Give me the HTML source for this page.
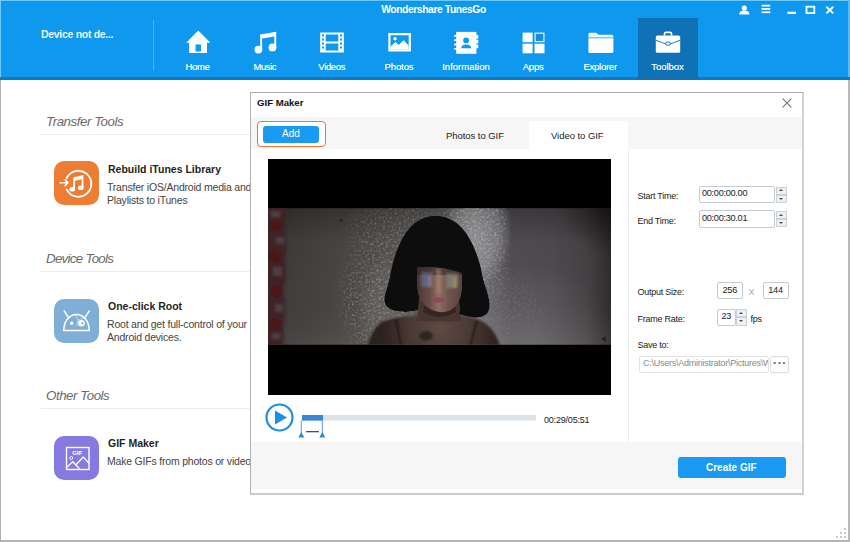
<!DOCTYPE html>
<html lang="en">
<head>
<meta charset="utf-8">
<title>Wondershare TunesGo</title>
<style>
*{box-sizing:border-box;margin:0;padding:0}
html,body{width:850px;height:542px;overflow:hidden;background:#fff}
body{position:relative;font-family:"Liberation Sans","DejaVu Sans",sans-serif;color:#222;font-size:10px}
.abs{position:absolute}
#win{position:absolute;left:0;top:0;width:850px;height:542px;background:#fff;overflow:hidden}
#winborder{position:absolute;left:0;top:80px;width:850px;height:462px;border-left:1px solid #b0b0b0;border-right:2px solid #b9b9b9;border-bottom:2px solid #b4b4b4;pointer-events:none;z-index:50}
/* header */
#hdr{position:absolute;left:0;top:0;width:850px;height:80px;background:#0f99ee}
#hdr .topline{position:absolute;left:0;top:0;width:850px;height:2px;background:linear-gradient(#6ccbfb 0,#6ccbfb 50%,#1690dc 50%,#1690dc 100%)}
#hdr .band{position:absolute;left:0;top:77px;width:850px;height:3px;background:#0e7ac4}
#hdr .divider{position:absolute;left:153px;top:20px;width:1px;height:51px;background:#4fb3f3}
#title{position:absolute;left:0;top:3px;width:867px;text-align:center;color:#fff;font-weight:bold;font-size:10.3px;line-height:13px;letter-spacing:-0.4px;white-space:nowrap}
#device{position:absolute;left:41px;top:28px;color:#e9f6ff;font-weight:bold;font-size:10.5px;line-height:13px;white-space:nowrap;letter-spacing:-0.3px}
.nav{position:absolute;top:18px;width:60px;height:62px;color:#fff;text-align:center}
.nav.sel{background:#0f71b6}
.nav svg{position:absolute;left:15px;top:10px;width:30px;height:28px}
.nav span{position:absolute;left:-10px;text-shadow:0 0 0.6px rgba(255,255,255,0.8);width:80px;top:43px;font-size:9.5px;line-height:12px;text-align:center;white-space:nowrap;color:#f2faff}
/* left panel */
.sect{position:absolute;left:46px;font-style:italic;color:#6a6a6a;font-size:13.3px;line-height:16px;white-space:nowrap;letter-spacing:-0.45px}
.rule{position:absolute;left:41px;width:300px;height:1px;background:#ededed}
.ico{position:absolute;left:54px;width:45px;height:44px}
.tname{position:absolute;left:108px;font-weight:bold;font-size:10.5px;line-height:13px;color:#1f1f1f;white-space:nowrap}
.tdesc{position:absolute;left:107px;font-size:10.5px;line-height:12.5px;color:#444;white-space:nowrap;letter-spacing:-0.2px}
/* dialog */
#dlg{position:absolute;left:250px;top:92px;width:554px;height:402.700px;background:#fff;border-top:1px solid #a3adb8;border-left:1px solid #adb3b9;border-right:2px solid #d2d2d2;border-bottom:2.200px solid #cbcbcb;overflow:hidden}
#dlg .dtitle{position:absolute;left:6px;top:2.5px;font-weight:bold;font-size:9.6px;line-height:13px;color:#111;white-space:nowrap}
#dlg .tabbar{position:absolute;left:0;top:23.500px;width:552px;height:32.500px;background:#f6f6f7}
#dlg .tabsel{position:absolute;left:278px;top:28px;width:99px;height:30px;background:#fff}
.tabtxt{position:absolute;top:36px;font-size:9.500px;letter-spacing:-0.050px;line-height:13px;color:#222;white-space:nowrap}
#dlg .foot{position:absolute;left:0;top:349px;width:552px;height:47.300px;background:#f6f6f7}
#dlg .vsep{position:absolute;left:377px;top:57px;width:1px;height:292px;background:#ececec}
.lbl{position:absolute;left:386.500px;font-size:9px;line-height:12px;color:#222;white-space:nowrap;letter-spacing:-0.250px}
.inp{position:absolute;height:17.600px;border:1px solid #c3cad2;border-radius:2px;background:#fff;font-size:9.200px;line-height:13px;color:#222;white-space:nowrap;overflow:hidden;letter-spacing:-0.300px}
.spin{position:absolute;width:10.500px;height:16px}
.spin i{position:absolute;left:0;width:10.500px;height:8px;border:1px solid #c9d0d8;background:#eef1f4;display:block}
.spin i:before{content:"";position:absolute;left:2.250px;top:2px;border:2px solid transparent}
.spin i.u{top:0}.spin i.u:before{border-bottom:2.200px solid #4a4a4a;top:-0.400px}
.spin i.d{top:8px}.spin i.d:before{border-top:2.200px solid #4a4a4a;top:2px}
.btn{position:absolute;background:#1a9af0;color:#fff;text-align:center;border-radius:3px;white-space:nowrap}
</style>
</head>
<body>
<div id="win">
  <!-- HEADER -->
  <div id="hdr">
    <div class="topline"></div>
    <div class="abs" style="left:0;top:0;width:1px;height:80px;background:#6ccbfb"></div>
    <div class="abs" style="left:848px;top:0;width:2px;height:80px;background:#5fb9f5"></div>
    <div class="band"></div>
    <div class="divider"></div>
    <div id="title">Wondershare TunesGo</div>
    <div id="device">Device not de...</div>

    <div class="nav" style="left:168px"><svg viewBox="0 0 30 28"><path d="M15.300 2.500 L27.400 14.800 H24 V25 H6.200 V14.800 H3.200 Z M12.500 16.600 V23.400 H18 V16.600 Z" fill="#fff" fill-rule="evenodd"/></svg><span style="left:-10.400px;letter-spacing:-0.300px">Home</span></div>
    <div class="nav" style="left:235px"><svg viewBox="0 0 30 28"><path d="M10.200 6.600 L26.200 3.800 V19.500 H24.300 V8.500 L12.100 10.600 V21.500 H10.200 Z" fill="#fff"/><circle cx="8.400" cy="21.600" r="3.900" fill="#fff"/><circle cx="22.500" cy="19.400" r="3.900" fill="#fff"/></svg><span style="left:-10.200px;letter-spacing:-0.450px">Music</span></div>
    <div class="nav" style="left:302px"><svg viewBox="0 0 30 28"><path d="M3.200 4.600 H26.800 V24.400 H3.200 Z M8.700 6.600 V13.600 H21.300 V6.600 Z M8.700 15.400 V22.400 H21.300 V15.400 Z M5 6.500 V8.500 H7 V6.500 Z M5 10.500 V12.500 H7 V10.500 Z M5 14.500 V16.500 H7 V14.500 Z M5 18.500 V20.500 H7 V18.500 Z M23 6.500 V8.500 H25 V6.500 Z M23 10.500 V12.500 H25 V10.500 Z M23 14.500 V16.500 H25 V14.500 Z M23 18.500 V20.500 H25 V18.500 Z" fill="#fff" fill-rule="evenodd"/></svg><span style="left:-10.300px;letter-spacing:-0.350px">Videos</span></div>
    <div class="nav" style="left:369px"><svg viewBox="0 0 30 28"><path d="M4.300 5 H26.900 V23.400 H4.300 Z M6.500 7.200 V21.200 H24.700 V7.200 Z" fill="#fff" fill-rule="evenodd"/><path d="M6.500 21.200 V18.500 L11.500 14 L14.800 17 L19.500 12.300 L24.700 17.500 V21.200 Z" fill="#fff"/><circle cx="11" cy="10.800" r="1.700" fill="#fff"/></svg><span style="left:-10px;letter-spacing:-0.100px">Photos</span></div>
    <div class="nav" style="left:437px"><svg viewBox="0 0 30 28"><path d="M4.200 3.900 H24.400 V25.800 H4.200 Z" fill="#fff"/><circle cx="14.100" cy="12.400" r="2.900" fill="#0f99ee"/><path d="M9.200 20.200 Q9.200 16.400 14.100 16.400 Q19.200 16.400 19.200 20.200 Z" fill="#0f99ee"/><g fill="#fff"><rect x="2" y="7" width="4" height="1.800" rx="0.900"/><rect x="2" y="11.300" width="4" height="1.800" rx="0.900"/><rect x="2" y="15.600" width="4" height="1.800" rx="0.900"/><rect x="2" y="19.900" width="4" height="1.800" rx="0.900"/></g><g fill="#fff"><rect x="24" y="7" width="2.300" height="3.600"/><rect x="24" y="11.800" width="2.300" height="3.600"/><rect x="24" y="16.600" width="2.300" height="3.600"/></g></svg><span style="left:-11px">Information</span></div>
    <div class="nav" style="left:504px"><svg viewBox="0 0 30 28"><rect x="3.600" y="4.600" width="10" height="9.600" fill="#fff"/><rect x="16.100" y="5.200" width="8.800" height="8.400" fill="#1a8be0" stroke="#fff" stroke-width="1.200" stroke-opacity="0.9"/><rect x="3.600" y="15.700" width="10" height="9.600" fill="#fff"/><rect x="15.500" y="15.700" width="10" height="9.600" fill="#fff"/></svg><span style="left:-10.900px;letter-spacing:-0.200px">Apps</span></div>
    <div class="nav" style="left:571px"><svg viewBox="0 0 30 28"><path d="M2.400 6.500 Q2.400 4.800 4 4.800 H10.500 L12.500 6.800 H25.800 Q27.400 6.800 27.400 8.400 V9.600 H2.400 Z" fill="#fff" opacity="0.93"/><path d="M2.400 10.300 H27.400 V23.400 Q27.400 25 25.800 25 H4 Q2.400 25 2.400 23.400 Z" fill="#fff"/></svg><span style="left:-10.900px;letter-spacing:-0.250px">Explorer</span></div>
    <div class="nav sel" style="left:638px"><svg viewBox="0 0 30 28"><path d="M11.500 7.600 V5.800 Q11.500 4.400 13 4.400 H17 Q18.500 4.400 18.500 5.800 V7.600" fill="none" stroke="#fff" stroke-width="1.700"/><path d="M2.800 9 Q2.800 7.400 4.400 7.400 H25.600 Q27.200 7.400 27.200 9 V23.200 Q27.200 24.800 25.600 24.800 H4.400 Q2.800 24.800 2.800 23.200 Z" fill="#fff"/><path d="M2.800 12.200 L13 16 M17 16 L27.200 12.200" stroke="#0f71b6" stroke-width="0.900" fill="none"/><rect x="12.700" y="14" width="4.600" height="3.200" rx="1.200" fill="#fff" stroke="#0f71b6" stroke-width="0.900"/></svg><span style="left:-10.500px">Toolbox</span></div>

    <!-- window controls -->
    <svg class="abs" style="left:735px;top:2px;width:100px;height:16px" viewBox="0 0 100 16">
      <g fill="#fff">
        <circle cx="9.300" cy="6" r="2.600"/><path d="M4.200 12.600 Q4.200 8.400 9.300 8.400 Q14.400 8.400 14.400 12.600 Z"/>
        <rect x="26.600" y="2.800" width="8.700" height="1.700"/><rect x="26.600" y="6.100" width="8.700" height="1.700"/><rect x="26.600" y="9.400" width="8.700" height="1.700"/>
        <rect x="52.400" y="9.700" width="8.600" height="2.300"/>
      </g>
      <rect x="71.500" y="4.700" width="7.800" height="6.400" fill="none" stroke="#fff" stroke-width="1.800"/>
      <path d="M91.300 4.800 L98.300 11.400 M98.300 4.800 L91.300 11.400" stroke="#fff" stroke-width="1.900" fill="none"/>
    </svg>
  </div>

  <!-- LEFT TOOLS -->
  <div class="sect" style="top:114px">Transfer Tools</div>
  <div class="rule" style="top:134px"></div>
  <svg class="ico" style="top:161px" viewBox="0 0 45 44"><rect width="45" height="44" rx="10" fill="#ee7d34"/><path d="M12.600 17.200 A13 13 0 1 1 12.600 28.400" fill="none" stroke="#fff" stroke-width="1.800" stroke-linecap="round"/><path d="M6 21.800 H13.500 M11 18.800 L14 21.800 L11 24.800" fill="none" stroke="#fff" stroke-width="1.500" stroke-linecap="round" stroke-linejoin="round"/><path d="M19.200 16.400 L29.400 14 V26.400 H27.700 V18.200 L20.900 19.800 V28 H19.200 Z" fill="#fff"/><ellipse cx="18.200" cy="28.300" rx="2.800" ry="2.300" fill="#fff"/><ellipse cx="26.800" cy="26.800" rx="2.800" ry="2.300" fill="#fff"/></svg>
  <div class="tname" style="top:163px">Rebuild iTunes Library</div>
  <div class="tdesc" style="top:181px">Transfer iOS/Android media and<br>Playlists to iTunes</div>

  <div class="sect" style="top:251px;letter-spacing:-0.7px">Device Tools</div>
  <div class="rule" style="top:271px"></div>
  <svg class="ico" style="top:299px" viewBox="0 0 45 44"><rect width="45" height="44" rx="10" fill="#7fafd7"/><path d="M9.800 31.400 H35.200 A12.700 16 0 0 0 9.800 31.400 Z" fill="none" stroke="#fff" stroke-width="1.500" stroke-linejoin="round"/><path d="M10.300 12 L14.200 18.200 M35.200 12 L31.200 18.200" stroke="#fff" stroke-width="1.500" stroke-linecap="round" fill="none"/><circle cx="17.700" cy="24.200" r="1.700" fill="#fff"/><circle cx="27.400" cy="24.200" r="3.300" fill="#fff"/><circle cx="28.400" cy="24.200" r="1.100" fill="#7fafd7"/><path d="M21.500 16 L24 21 L22.500 27 M24 21 L30 19" stroke="#fff" stroke-width="0.600" fill="none" opacity="0.8"/></svg>
  <div class="tname" style="top:300px">One-click Root</div>
  <div class="tdesc" style="top:318px">Root and get full-control of your<br>Android devices.</div>

  <div class="sect" style="top:388px">Other Tools</div>
  <div class="rule" style="top:408px"></div>
  <svg class="ico" style="top:436px" viewBox="0 0 45 44"><rect width="45" height="44" rx="10" fill="#8679e0"/><rect x="12.500" y="11.500" width="22.500" height="22" fill="none" stroke="#fff" stroke-width="1.400"/><text x="23.300" y="18.500" font-family="Liberation Sans, sans-serif" font-weight="bold" font-size="6.200" fill="#fff" text-anchor="middle">GIF</text><circle cx="17.200" cy="22" r="1.500" fill="none" stroke="#fff" stroke-width="0.900"/><path d="M12.800 31.300 L18.700 25.700 L25.500 32.700 M22 28.800 L29.200 21 L35 27.300" fill="none" stroke="#fff" stroke-width="1.300" stroke-linejoin="round"/></svg>
  <div class="tname" style="top:437px">GIF Maker</div>
  <div class="tdesc" style="top:455px">Make GIFs from photos or videos</div>

  <!-- DIALOG -->
  <div id="dlg">
    <div class="dtitle">GIF Maker</div>
    <svg class="abs" style="left:529.300px;top:2.500px;width:14px;height:14px" viewBox="0 0 14 14"><path d="M2.700 2.700 L11.300 11.300 M11.300 2.700 L2.700 11.300" stroke="#707070" stroke-width="1.100" fill="none"/></svg>
    <div class="tabbar"></div>
    <div class="tabsel"></div>
    <div class="abs" style="left:6.300px;top:28.200px;width:68.500px;height:26.200px;border:1.500px solid #e8743a;border-radius:4px;background:#fff"></div>
    <div class="btn" style="left:12px;top:33px;width:56px;height:16.500px;font-size:10px;line-height:15.500px">Add</div>
    <div class="tabtxt" style="left:195px">Photos to GIF</div>
    <div class="tabtxt" style="left:300px">Video to GIF</div>

    <!-- video -->
    <svg class="abs" id="video" style="left:17.300px;top:65.700px;width:343px;height:236px" viewBox="0 0 343 236" preserveAspectRatio="none">
      <defs>
        <linearGradient id="wall" gradientUnits="userSpaceOnUse" x1="0" y1="0" x2="343" y2="0">
          <stop offset="0" stop-color="#322e2e"/>
          <stop offset="0.06" stop-color="#413d3c"/>
          <stop offset="0.13" stop-color="#45413f"/>
          <stop offset="0.28" stop-color="#4e4a47"/>
          <stop offset="0.38" stop-color="#575351"/>
          <stop offset="0.5" stop-color="#605e5e"/>
          <stop offset="0.6" stop-color="#737175"/>
          <stop offset="0.66" stop-color="#605e63"/>
          <stop offset="0.71" stop-color="#524f53"/>
          <stop offset="0.83" stop-color="#4f4b4f"/>
          <stop offset="0.93" stop-color="#454144"/>
          <stop offset="1" stop-color="#302c2e"/>
        </linearGradient>
        <linearGradient id="vshade" x1="0" y1="0" x2="0" y2="1">
          <stop offset="0" stop-color="#000" stop-opacity="0.28"/>
          <stop offset="0.25" stop-color="#000" stop-opacity="0.04"/>
          <stop offset="0.6" stop-color="#000" stop-opacity="0"/>
          <stop offset="1" stop-color="#fff" stop-opacity="0.05"/>
        </linearGradient>
        <radialGradient id="glowR" gradientUnits="userSpaceOnUse" cx="262" cy="190" r="85">
          <stop offset="0" stop-color="#fff" stop-opacity="0.13"/>
          <stop offset="1" stop-color="#fff" stop-opacity="0"/>
        </radialGradient>
        <radialGradient id="vigTR" gradientUnits="userSpaceOnUse" cx="348" cy="40" r="58">
          <stop offset="0" stop-color="#000" stop-opacity="0.55"/>
          <stop offset="1" stop-color="#000" stop-opacity="0"/>
        </radialGradient>
        <radialGradient id="gm" cx="0.5" cy="0.5" r="0.5">
          <stop offset="0" stop-color="#fff" stop-opacity="1"/>
          <stop offset="0.6" stop-color="#fff" stop-opacity="0.75"/>
          <stop offset="1" stop-color="#fff" stop-opacity="0"/>
        </radialGradient>
        <radialGradient id="skin" gradientUnits="userSpaceOnUse" cx="172" cy="170" r="60">
          <stop offset="0" stop-color="#5e4a44"/>
          <stop offset="0.5" stop-color="#4a3934"/>
          <stop offset="1" stop-color="#2c201e"/>
        </radialGradient>
        <linearGradient id="face" gradientUnits="userSpaceOnUse" x1="149" y1="0" x2="194" y2="0">
          <stop offset="0" stop-color="#4a3636"/>
          <stop offset="0.3" stop-color="#6d4f4c"/>
          <stop offset="0.48" stop-color="#8e6f60"/>
          <stop offset="0.7" stop-color="#705350"/>
          <stop offset="1" stop-color="#5a4344"/>
        </linearGradient>
        <filter id="soft" x="-10%" y="-10%" width="120%" height="120%"><feGaussianBlur stdDeviation="1.2"/></filter>
        <filter id="soft3" x="-30%" y="-10%" width="160%" height="120%"><feGaussianBlur stdDeviation="1.8"/></filter>
        <filter id="soft2" x="-10%" y="-10%" width="120%" height="120%"><feGaussianBlur stdDeviation="0.6"/></filter>
        <filter id="grain" x="0" y="0" width="100%" height="100%">
          <feTurbulence type="fractalNoise" baseFrequency="0.45" numOctaves="2" seed="11" result="n"/>
          <feColorMatrix in="n" type="matrix" values="0 0 0 0 0.64  0 0 0 0 0.63  0 0 0 0 0.65  2.2 0 0 0 -1.0"/>
        </filter>
        <mask id="gmask" maskUnits="userSpaceOnUse" x="0" y="0" width="343" height="236">
          <ellipse cx="214" cy="88" rx="30" ry="68" fill="url(#gm)"/>
          <ellipse cx="205" cy="62" rx="40" ry="30" fill="url(#gm)"/>
          <ellipse cx="112" cy="140" rx="48" ry="75" fill="url(#gm)" opacity="0.85"/>
          <ellipse cx="130" cy="70" rx="60" ry="34" fill="url(#gm)" opacity="0.6"/>
          <ellipse cx="240" cy="150" rx="45" ry="45" fill="url(#gm)" opacity="0.3"/>
        </mask>
        <clipPath id="pic"><rect x="0" y="49.200" width="343" height="136.600"/></clipPath>
      </defs>
      <rect x="0" y="0" width="343" height="236" fill="#000"/>
      <g clip-path="url(#pic)">
        <rect x="0" y="49" width="343" height="137" fill="url(#wall)"/>
        <rect x="0" y="49" width="343" height="137" fill="url(#vshade)"/>
        <rect x="0" y="49" width="343" height="137" fill="url(#glowR)"/>
        <rect x="0" y="49" width="343" height="137" fill="url(#vigTR)"/>
        <ellipse cx="210" cy="72" rx="34" ry="58" fill="url(#gm)" opacity="0.24"/>
        <ellipse cx="118" cy="150" rx="30" ry="55" fill="url(#gm)" opacity="0.08"/>
        <g mask="url(#gmask)"><rect x="50" y="49" width="250" height="137" filter="url(#grain)" opacity="0.6"/></g>
        <!-- brick edge -->
        <g filter="url(#soft3)">
          <path d="M-2 47 H17 Q20 60 16 72 Q21 86 17 100 Q20 116 15 130 Q19 150 15 168 Q17 178 14 188 H-2 Z" fill="#3d2326"/>
          <path d="M3 62 q5 -4 9 1 q3 6 -2 9 q-6 2 -8 -3 Z M2 92 q6 -3 10 2 q2 8 -4 10 q-7 0 -7 -6 Z M4 128 q5 -5 9 0 q3 7 -3 12 q-7 -1 -7 -6 Z M3 160 q6 -3 9 3 q0 8 -5 9 q-6 -2 -5 -7 Z" fill="#4d1218" opacity="0.9"/>
          <path d="M3 52 h9 v6 h-9 Z M8 78 h8 v7 h-8 Z M5 108 h9 v9 h-9 Z M7 145 h8 v8 h-8 Z M4 174 h8 v6 h-8 Z" fill="#5e5553" opacity="0.55"/>
        </g>
        <circle cx="73" cy="61.500" r="1.200" fill="#1e1c1c"/>
        <path d="M333 180 l5 -3 v6 Z" fill="#242223"/>
        <!-- shoulders / body -->
        <g filter="url(#soft)">
          <path d="M99 190 Q103 170 114 163 Q128 157 146 157 L160 155 L184 155 Q206 157 217 164 Q228 172 233 190 Z" fill="url(#skin)"/>
          <path d="M158 140 H185 V162 H158 Z" fill="#44322f"/>
          <ellipse cx="158" cy="177" rx="7" ry="5" fill="#2a2220" opacity="0.9"/>
          <path d="M128 160 L133 187 M209 161 L202 187" stroke="#0e0b0b" stroke-width="1.600" fill="none"/>
        </g>
        <!-- hair + face -->
        <g filter="url(#soft2)">
          <path d="M168 57 C141 56 127 88 122 118 C119 132 114 140 118 146 C122 153 136 154 152 150 L190 154 C203 160 216 160 220 153 C224 144 219 134 215 120 C210 90 196 57 168 57 Z" fill="#09080b"/>
          <path d="M151 138 H191 L193 162 H149 Z" fill="#48362f"/>
          <path d="M156 146 Q171 158 187 146 L188 153 Q171 163 155 153 Z" fill="#2e2220" opacity="0.7"/>
          <path d="M149 104 H194 V130 Q193 144 183 151 Q172 156 162 150 Q150 143 149 128 Z" fill="url(#face)"/>
          <path d="M149 104 H194 V116 H149 Z" fill="#2a2222" opacity="0.55"/>
          <g filter="url(#soft)"><path d="M153 113 h12 v15 h-12 Z" fill="#6e7482" opacity="0.55"/>
          <path d="M178 114 h12 v15 h-12 Z" fill="#8a8a72" opacity="0.55"/>
          <path d="M156 116 h3 v12 h-3 Z" fill="#5868a0" opacity="0.7"/><path d="M160 117 h3 v11 h-3 Z" fill="#a08a9a" opacity="0.5"/>
          <path d="M181 117 h3 v12 h-3 Z" fill="#6a8a9a" opacity="0.6"/><path d="M185 118 h3.500 v11 h-3.500 Z" fill="#b09a4a" opacity="0.7"/>
          <path d="M168 110 h5 v24 h-5 Z" fill="#a88670" opacity="0.5"/></g>
          <ellipse cx="170" cy="141" rx="6.500" ry="2.600" fill="#8a4a55"/>
          <path d="M146 82 Q168 70 196 84 L197 115 Q174 106 148 108 Z" fill="#09080b"/>
          <path d="M149 106 Q142 130 150 151 L136 153 Q128 130 138 104 Z" fill="#09080b"/>
          <path d="M194 112 Q199 134 191 155 L208 157 Q212 130 204 104 Z" fill="#09080b"/>
        </g>
      </g>
    </svg>

    <!-- player -->
    <svg class="abs" style="left:10px;top:306px;width:340px;height:44px" viewBox="0 0 340 44">
      <circle cx="18.500" cy="18.500" r="13" fill="#fff" stroke="#1a8fe3" stroke-width="2.200"/>
      <path d="M14 11.500 L26 18.500 L14 25.500 Z" fill="#1a8fe3"/>
      <rect x="41" y="16" width="234" height="5.600" fill="#dde2e8"/>
      <rect x="41" y="16" width="21" height="5.600" fill="#3a86d8"/>
      <path d="M40.300 21.500 V37 M61.300 21.500 V37" stroke="#4a90dc" stroke-width="0.900"/>
      <path d="M40.300 33 L43.300 38.500 H37.300 Z M61.300 33 L64.300 38.500 H58.300 Z" fill="#2b8ae0"/>
      <rect x="45" y="32" width="13" height="1.300" fill="#34557a"/>
    </svg>
    <div class="abs" style="left:293px;top:321px;font-size:9px;line-height:12px;color:#222;white-space:nowrap;letter-spacing:-0.2px">00:29/05:51</div>

    <div class="vsep"></div>
    <!-- settings -->
    <div class="lbl" style="top:96.500px">Start Time:</div>
    <div class="inp" style="left:448px;top:92.700px;width:75.500px;padding-left:2px">00:00:00.00</div>
    <div class="spin" style="left:525px;top:93.500px"><i class="u"></i><i class="d"></i></div>
    <div class="lbl" style="top:121.500px">End Time:</div>
    <div class="inp" style="left:448px;top:117.300px;width:75.500px;padding-left:2px;line-height:15px">00:00:30.01</div>
    <div class="spin" style="left:525px;top:118px"><i class="u"></i><i class="d"></i></div>

    <div class="lbl" style="top:192.500px">Output Size:</div>
    <div class="inp" style="left:466px;top:189.300px;width:25.500px;height:17.200px;text-align:center;line-height:15px">256</div>
    <div class="abs" style="left:497.500px;top:192.500px;font-size:9px;line-height:12px;color:#a8a8a8">X</div>
    <div class="inp" style="left:511.500px;top:189.300px;width:26px;height:17.200px;text-align:center;line-height:15px">144</div>

    <div class="lbl" style="top:219.500px">Frame Rate:</div>
    <div class="inp" style="left:466px;top:216.200px;width:18.500px;text-align:center;height:16.600px">23</div>
    <div class="spin" style="left:485px;top:216.200px;height:16.600px"><i class="u" style="height:8.300px"></i><i class="d" style="top:8.300px;height:8.300px"></i></div>
    <div class="lbl" style="left:499.500px;top:219.500px">fps</div>

    <div class="lbl" style="top:245.500px">Save to:</div>
    <div class="inp" style="left:387.500px;top:262.800px;width:130.500px;height:16.800px;padding-left:3.500px;color:#8a8a8a;border-color:#e3e3e3;font-size:9px;letter-spacing:-0.250px">C:\Users\Administrator\Pictures\Wondershare</div>
    <div class="inp" style="left:519px;top:262.800px;width:19px;height:17.200px;text-align:center;color:#666;border-color:#dcdcdc;letter-spacing:0.600px;font-size:12px;font-weight:bold;line-height:12px;padding-left:1px">&middot;&middot;&middot;</div>

    <div class="foot"></div>
    <div class="btn" style="left:427.300px;top:364.400px;width:108px;height:20.200px;font-weight:bold;font-size:10px;line-height:21px;padding-right:2px">Create GIF</div>
  </div>

  <!-- resize grip -->
  <svg class="abs" style="left:836px;top:528px;width:12px;height:12px" viewBox="0 0 12 12"><g fill="#c8c8c8"><rect x="8" y="8" width="2" height="2"/><rect x="8" y="4" width="2" height="2"/><rect x="4" y="8" width="2" height="2"/><rect x="8" y="0" width="2" height="2"/><rect x="4" y="4" width="2" height="2"/><rect x="0" y="8" width="2" height="2"/></g></svg>
  <div id="winborder"></div>
</div>
</body>
</html>
